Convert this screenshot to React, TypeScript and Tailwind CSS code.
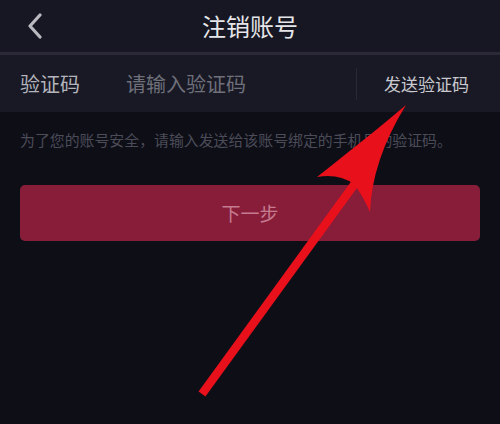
import { useState } from "react";

export default function App() {
    const [code, setCode] = useState("");

    return (
        <div className="relative w-[500px] h-[424px] overflow-hidden bg-[#0e0e17] font-['Noto_Sans_CJK_SC','Noto_Sans',sans-serif]">
            {/* header */}
            <div className="grid grid-cols-[80px_1fr_80px] items-center h-[52px] bg-[#161722]">
                <div className="pl-[26px] flex items-center">
                    <svg width="18" height="26" viewBox="0 0 18 26" fill="none">
                        <path d="M14 2 L4 13 L14 24" stroke="#b9b9bf" strokeWidth="3.2" strokeLinecap="round" strokeLinejoin="round" />
                    </svg>
                </div>
                <div className="text-center text-[24px] leading-[30px] text-[#e6e6ea]">注销账号</div>
                <div />
            </div>
            <div className="h-[3px] bg-[#2b2837]" />

            {/* code row */}
            <div className="flex items-center h-[57px] bg-[#181925] pl-5 pr-[31px]">
                <span className="text-[20px] leading-[26px] text-[#b4b4bb] whitespace-nowrap">验证码</span>
                <input
                    value={code}
                    onChange={(e) => setCode(e.target.value)}
                    placeholder="请输入验证码"
                    className="ml-[46px] w-[200px] bg-transparent outline-none text-[20px] leading-[26px] text-[#d0d0d6] placeholder:text-[#6f707a]"
                />
                <div className="ml-auto w-px h-[32px] bg-[#272835]" />
                <button className="ml-[27px] text-[17px] leading-[24px] text-[#c9c9cf] whitespace-nowrap">发送验证码</button>
            </div>

            {/* hint */}
            <p className="px-5 pt-[18px] text-[14.9px] leading-[20px] text-[#4b4c57] whitespace-nowrap">
                为了您的账号安全，请输入发送给该账号绑定的手机号的验证码。
            </p>

            {/* next */}
            <div className="px-5 mt-[35px]">
                <button className="w-full h-[56px] rounded-[5px] bg-[#881d3a] text-[19px] text-[#c57b90]">下一步</button>
            </div>

            {/* red annotation arrow */}
            <svg className="absolute left-0 top-0 pointer-events-none" width="500" height="424" viewBox="0 0 500 424">
                <line x1="202" y1="394" x2="356" y2="182" stroke="#e8101a" strokeWidth="8.5" />
                <path d="M406,105 C380,127 345,155 317,177 Q338,173 354,184 Q363,196 370,212 Q372,160 406,105 Z" fill="#e8101a" />
            </svg>
        </div>
    );
}
